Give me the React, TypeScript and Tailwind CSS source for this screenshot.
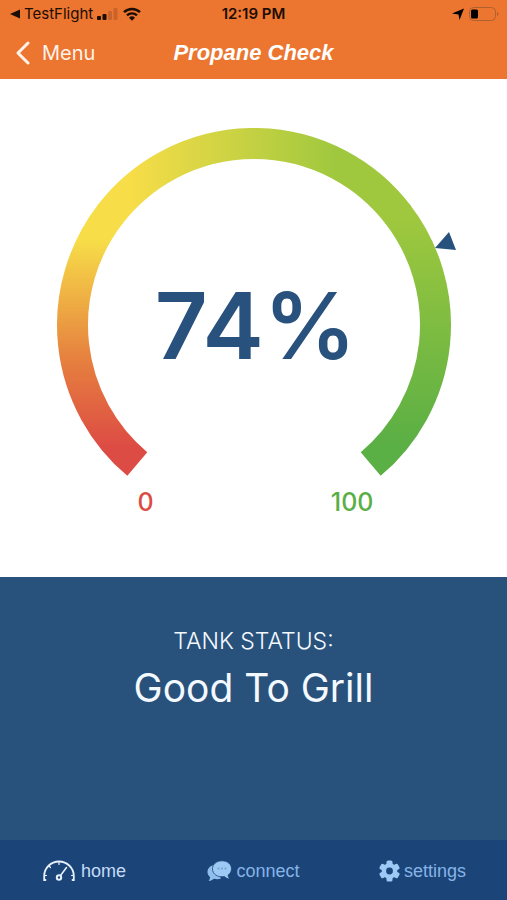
import React from "react";

function StatusBar() {
  return (
    <div className="grid h-7 grid-cols-[1fr_auto_1fr] items-center px-2 text-[15px] leading-7 text-[#1c0d05]">
      <div className="flex items-center gap-1">
        <svg className="h-3 w-3" viewBox="0 0 12 12" fill="currentColor" aria-hidden="true">
          <path d="M12 1.500v9L2 6z" />
        </svg>
        <span>TestFlight</span>
        <svg className="h-3 w-[22px]" viewBox="0 0 22 12" aria-hidden="true">
          <rect x="0" y="8" width="4" height="4" rx="1" fill="currentColor" />
          <rect x="5.500" y="6" width="4" height="6" rx="1" fill="currentColor" />
          <rect x="11" y="3" width="4" height="9" rx="1" fill="#c7632b" />
          <rect x="16.500" y="0" width="4" height="12" rx="1" fill="#c7632b" />
        </svg>
        <svg className="h-[14px] w-[18px]" viewBox="0 0 18 14" fill="none" stroke="currentColor" strokeWidth="2.4" aria-hidden="true">
          <path d="M1 5.2a11.6 11.6 0 0 1 16 0" />
          <path d="M4 8.4a7.3 7.3 0 0 1 10 0" />
          <path d="M9 13.8 6 10.8a4.3 4.3 0 0 1 6 0z" fill="currentColor" stroke="none" />
        </svg>
      </div>
      <span className="font-semibold">12:19 PM</span>
      <div className="flex items-center justify-end gap-1">
        <svg className="h-3 w-3" viewBox="0 0 12 12" fill="#000" aria-hidden="true">
          <path d="M12 .5 7.500 12 6.500 6.500 0 5.500z" />
        </svg>
        <svg className="h-[14px] w-[31px]" viewBox="0 0 31 14" aria-hidden="true">
          <rect x="1.5" y=".5" width="26" height="13" rx="4" fill="none" stroke="#b0602f" />
          <rect x="3" y="2.5" width="7" height="9" rx="1.5" fill="#000" />
          <path d="M29 5v4q1.500-.6 1.500-2T29 5z" fill="#b0602f" />
        </svg>
      </div>
    </div>
  );
}

function Gauge() {
  return (
    <div className="grid justify-items-center">
      <svg className="col-start-1 row-start-1 h-[348px] w-[414px]" viewBox="0 0 414 348" fill="none" role="img" aria-label="Propane level 74 percent">
        <defs>
          <linearGradient id="low" gradientUnits="userSpaceOnUse" x1="0" y1="318" x2="0" y2="112">
            <stop offset="0" stopColor="#dd4c44" />
            <stop offset=".42" stopColor="#e6803f" />
            <stop offset="1" stopColor="#f7dd48" />
          </linearGradient>
          <linearGradient id="mid" gradientUnits="userSpaceOnUse" x1="84" y1="0" x2="290" y2="0">
            <stop offset="0" stopColor="#f7dd48" />
            <stop offset="1" stopColor="#9fc83e" />
          </linearGradient>
          <linearGradient id="high" gradientUnits="userSpaceOnUse" x1="0" y1="90" x2="0" y2="318">
            <stop offset="0" stopColor="#9fc83e" />
            <stop offset="1" stopColor="#5aaf45" />
          </linearGradient>
        </defs>
        <g strokeWidth="31">
          <path d="M90.300 336A181.500 181.500 0 0 1 63.400 86" stroke="url(#low)" />
          <path d="M323.700 336A181.500 181.500 0 0 0 350.600 86" stroke="url(#high)" />
          <path d="M62.600 87A181.500 181.500 0 0 1 351.400 87" stroke="url(#mid)" />
        </g>
        <path d="M388 120 402 104 409 122z" fill="#28527d" />
      </svg>
      <p className="col-start-1 row-start-1 self-center pt-12 pl-1 text-[92px] leading-none font-semibold text-[#28527d]">
        74%
      </p>
    </div>
  );
}

const tab = "flex items-center justify-center gap-1 text-[#86b4e6]";

export default function App() {
  return (
    <div className="flex min-h-screen flex-col bg-white font-['Inter',sans-serif]">
      <header className="bg-[#ec752f]">
        <StatusBar />
        <div className="grid h-[51px] grid-cols-[1fr_auto_1fr] items-center px-4 pb-0.5">
          <button type="button" className="flex items-center gap-3 justify-self-start text-xl text-[#fff3ea]">
            <svg className="h-6 w-[14px]" viewBox="0 0 14 24" fill="none" stroke="currentColor" strokeWidth="3" strokeLinecap="round" strokeLinejoin="round" aria-hidden="true">
              <path d="M12 2 2 12 12 22" />
            </svg>
            Menu
          </button>
          <h1 className="font-['Liberation_Sans',sans-serif] text-[22px] font-bold text-white italic">Propane Check</h1>
        </div>
      </header>

      <main className="flex flex-1 flex-col">
        <section className="pt-[49px] pb-[57px]">
          <Gauge />
          <div className="mx-auto flex w-[240px] justify-between pt-2 pl-1 text-[25px] leading-9 font-medium">
            <span className="text-[#dd4c44]">0</span>
            <span className="text-[#5aaf45]">100</span>
          </div>
        </section>
        <section className="flex-1 bg-[#28527b] pt-12 text-center text-[#f4f9ff]">
          <h2 className="text-[23px] leading-8 font-light">TANK STATUS:</h2>
          <p className="text-[39px] leading-[62px]">Good To Grill</p>
        </section>
      </main>

      <nav className="grid h-[60px] grid-cols-3 bg-[#1b4479] pt-0.5 font-['Liberation_Sans',sans-serif] text-lg">
        <a href="#home" aria-current="page" className="flex items-center justify-center gap-1.5 text-[#c5dcf6]">
          <svg className="h-[22px] w-8" viewBox="0 0 32 22" fill="none" stroke="#e6f1fc" strokeWidth="1.800" strokeLinecap="round" aria-hidden="true">
            <path d="M2.500 20H1.200V16A14.800 14.500 0 0 1 30.800 16V20H29.500" />
            <path d="M16 2v2.500M6 6l1.500 1.500M1.500 15.500h2M30.500 15.500h-2" strokeWidth="1.200" />
            <circle cx="16" cy="17.500" r="2.200" strokeWidth="2" />
            <path d="M17.500 15.500 23.500 7.500" strokeWidth="1.500" />
          </svg>
          home
        </a>
        <a href="#connect" className={tab}>
          <svg className="h-[22px] w-[25px]" viewBox="0 0 25 22" aria-hidden="true">
            <path d="M7 5C2.500 6 .5 9 .5 12c0 2 1 3.700 2.500 5 0 1.500-.5 3-1.500 4 2.500-.2 4-1 5.500-2.200 2.500.7 5 .5 7-.3z" fill="#8fbdec" />
            <path d="M15 .8c5.500 0 9.500 3.500 9.500 8 0 3-1.500 5-3.500 6.500.2 1.500.8 2.700 2 3.700-2.500-.1-4.200-1-5.500-2.400-7 1.200-12-2.500-12-7.800 0-4.500 4-8 9.500-8z" fill="#9ccaf5" stroke="#1b4479" strokeWidth=".8" />
            <g fill="#6f9cc9"><circle cx="11.500" cy="8.500" r="1" /><circle cx="15" cy="8.500" r="1" /><circle cx="18.500" cy="8.500" r="1" /></g>
          </svg>
          connect
        </a>
        <a href="#settings" className={tab}>
          <svg className="h-[22px] w-[21px]" viewBox="0 0 21 22" aria-hidden="true">
            <g fill="#9ccaf5" transform="translate(10.500 11)">
              <rect x="-3" y="-10.500" width="6" height="21" rx="1.600" />
              <rect x="-3" y="-10.500" width="6" height="21" rx="1.600" transform="rotate(60)" />
              <rect x="-3" y="-10.500" width="6" height="21" rx="1.600" transform="rotate(120)" />
              <circle r="7.800" />
              <circle r="3.400" fill="#1b4479" />
            </g>
          </svg>
          settings
        </a>
      </nav>
    </div>
  );
}
